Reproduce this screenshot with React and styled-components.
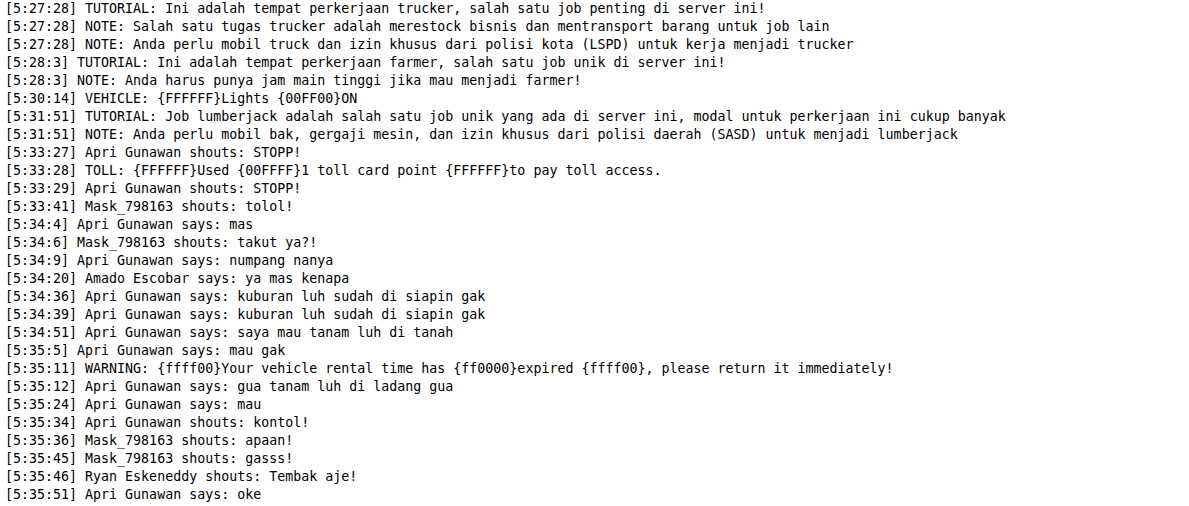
import React from 'react'
import styled, { createGlobalStyle } from 'styled-components'

const GlobalStyle = createGlobalStyle`
    html, body {
        margin: 0;
        padding: 0;
        background: #ffffff;
    }
`

const LogWrapper = styled.div`
    display: flex;
    flex-direction: column;
    padding: 0 0 0 5px;
    font-family: "DejaVu Sans Mono", "Liberation Mono", monospace;
    font-size: 13.3px;
    color: #000000;
`

const LogLine = styled.div`
    height: 18px;
    line-height: 18px;
    white-space: pre;
`

const chatLog = [
    ['5:27:28', 'TUTORIAL: Ini adalah tempat perkerjaan trucker, salah satu job penting di server ini!'],
    ['5:27:28', 'NOTE: Salah satu tugas trucker adalah merestock bisnis dan mentransport barang untuk job lain'],
    ['5:27:28', 'NOTE: Anda perlu mobil truck dan izin khusus dari polisi kota (LSPD) untuk kerja menjadi trucker'],
    ['5:28:3', 'TUTORIAL: Ini adalah tempat perkerjaan farmer, salah satu job unik di server ini!'],
    ['5:28:3', 'NOTE: Anda harus punya jam main tinggi jika mau menjadi farmer!'],
    ['5:30:14', 'VEHICLE: {FFFFFF}Lights {00FF00}ON'],
    ['5:31:51', 'TUTORIAL: Job lumberjack adalah salah satu job unik yang ada di server ini, modal untuk perkerjaan ini cukup banyak'],
    ['5:31:51', 'NOTE: Anda perlu mobil bak, gergaji mesin, dan izin khusus dari polisi daerah (SASD) untuk menjadi lumberjack'],
    ['5:33:27', 'Apri Gunawan shouts: STOPP!'],
    ['5:33:28', 'TOLL: {FFFFFF}Used {00FFFF}1 toll card point {FFFFFF}to pay toll access.'],
    ['5:33:29', 'Apri Gunawan shouts: STOPP!'],
    ['5:33:41', 'Mask_798163 shouts: tolol!'],
    ['5:34:4', 'Apri Gunawan says: mas'],
    ['5:34:6', 'Mask_798163 shouts: takut ya?!'],
    ['5:34:9', 'Apri Gunawan says: numpang nanya'],
    ['5:34:20', 'Amado Escobar says: ya mas kenapa'],
    ['5:34:36', 'Apri Gunawan says: kuburan luh sudah di siapin gak'],
    ['5:34:39', 'Apri Gunawan says: kuburan luh sudah di siapin gak'],
    ['5:34:51', 'Apri Gunawan says: saya mau tanam luh di tanah'],
    ['5:35:5', 'Apri Gunawan says: mau gak'],
    ['5:35:11', 'WARNING: {ffff00}Your vehicle rental time has {ff0000}expired {ffff00}, please return it immediately!'],
    ['5:35:12', 'Apri Gunawan says: gua tanam luh di ladang gua'],
    ['5:35:24', 'Apri Gunawan says: mau'],
    ['5:35:34', 'Apri Gunawan shouts: kontol!'],
    ['5:35:36', 'Mask_798163 shouts: apaan!'],
    ['5:35:45', 'Mask_798163 shouts: gasss!'],
    ['5:35:46', 'Ryan Eskeneddy shouts: Tembak aje!'],
    ['5:35:51', 'Apri Gunawan says: oke'],
]

function App() {
    return (
        <>
            <GlobalStyle />
            <LogWrapper>
                {chatLog.map(([time, msg], i) => (
                    <LogLine key={i}>[{time}] {msg}</LogLine>
                ))}
            </LogWrapper>
        </>
    )
}

export default App
